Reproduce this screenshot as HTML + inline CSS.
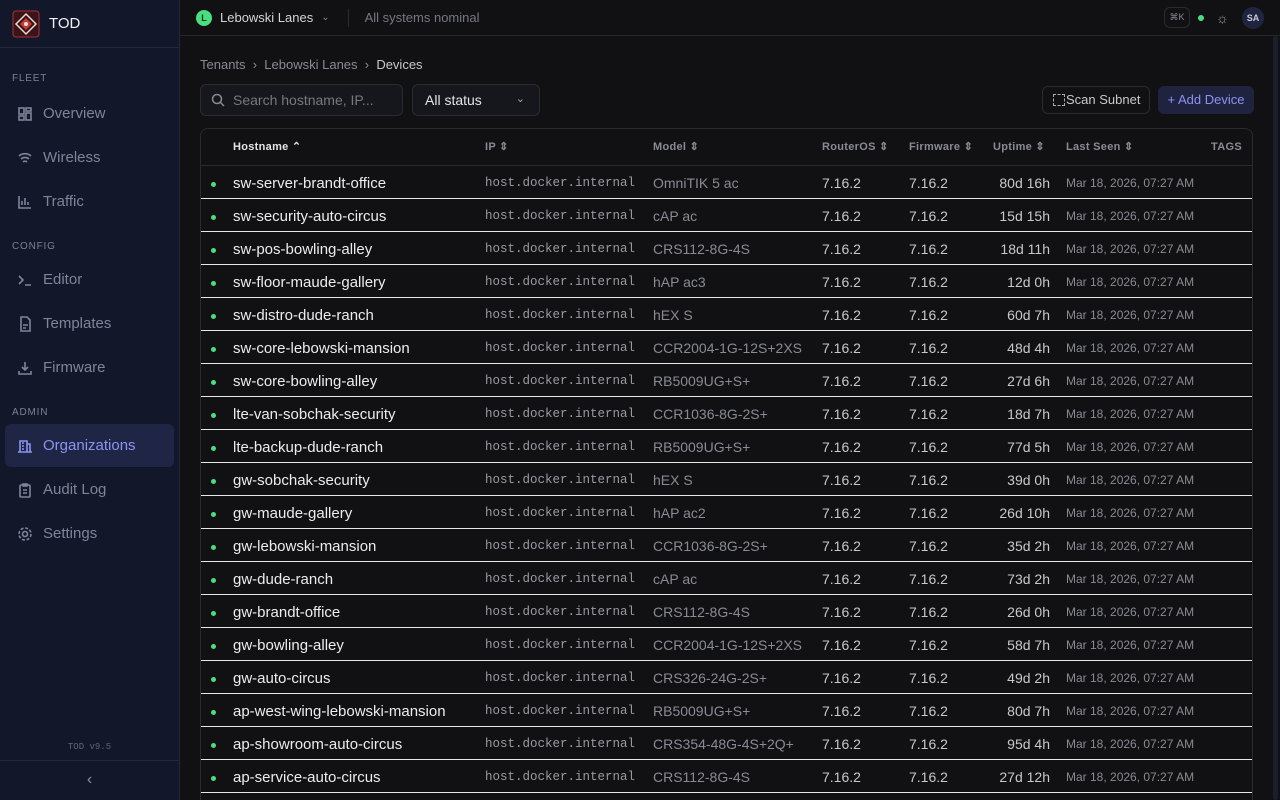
<!DOCTYPE html><html><head><style>
*{box-sizing:border-box;margin:0;padding:0}
html,body{width:1280px;height:800px;overflow:hidden}
body{background:#111113;font-family:"Liberation Sans",sans-serif;color:#e4e4e7;position:relative}
.sb{position:absolute;left:0;top:0;width:180px;height:800px;background:#121829;border-right:1px solid #23283a}
.logo{height:48px;border-bottom:1px solid #23283a;display:flex;align-items:center;padding-left:12px}
.logo span{margin-left:9px;font-size:15px;color:#f1f1f4}
.sec{font-size:10px;letter-spacing:.8px;color:#7b8094;padding-left:12px;margin-top:18px;margin-bottom:6px}
.it{display:flex;align-items:center;height:43px;margin:0 5px;padding-left:12px;border-radius:6px;color:#7f8599;font-size:15px;margin-bottom:1px}
.it svg{width:16px;height:16px;margin-right:10px;stroke:#7f8599;fill:none;stroke-width:1.6}
.it.a{background:#1f2645;color:#8b93f0}.it.a svg{stroke:#8b93f0}
.top{position:absolute;left:180px;top:0;right:0;height:36px;border-bottom:1px solid #25262b;display:flex;align-items:center;font-size:13px}
.bc{position:absolute;left:200px;top:57px;font-size:13px;color:#8a8a94}
.tbl{position:absolute;left:200px;top:128px;width:1053px;height:672px;border:1px solid #2a2b30;border-bottom:none;border-radius:8px 8px 0 0;overflow:hidden}
.hd{height:37px;border-bottom:1px solid #2a2b30;position:relative;font-size:11px;color:#8a8a94;font-weight:bold;letter-spacing:.3px}
.hd span,.r span{position:absolute;top:0;line-height:36px;white-space:nowrap}
.r{height:33px;border-bottom:1px solid #e8e8ea;position:relative}
.r span{line-height:35px}
.h{font-size:15px;color:#ececef}.ip{font-family:"Liberation Mono",monospace;font-size:12.5px;color:#9a9aa3}
.m{font-size:14px;color:#8a8a94}.v{font-size:14px;color:#c8c8cc}.ls{font-size:12px;color:#8a8a94}
.dot{width:5px;height:5px;border-radius:50%;background:#4ade80;top:16px!important;left:10px}
</style></head><body>
<div class="sb">
<div class="logo"><svg width="28" height="28" viewBox="0 0 28 28"><rect x="1" y="1" width="26" height="26" rx="3" fill="#3a1418" stroke="#a8303a"/><path d="M14 4L24 14L14 24L4 14Z" fill="none" stroke="#e8d8c8" stroke-width="1.5"/><path d="M14 8L20 14L14 20L8 14Z" fill="#c83a3a"/><circle cx="14" cy="14" r="2" fill="#f0e0d0"/></svg><span>TOD</span></div>
<div class="sec" style="margin-top:25px;margin-bottom:8px">FLEET</div>
<div class="it"><svg viewBox="0 0 16 16"><rect x="2" y="2" width="5" height="6"/><rect x="9" y="2" width="5" height="3"/><rect x="9" y="7" width="5" height="7"/><rect x="2" y="10" width="5" height="4"/></svg>Overview</div>
<div class="it"><svg viewBox="0 0 16 16"><path d="M2 6a9 9 0 0 1 12 0M4 9a6 6 0 0 1 8 0M6 12a3 3 0 0 1 4 0"/></svg>Wireless</div>
<div class="it"><svg viewBox="0 0 16 16"><path d="M2 2v12h12M5 11V7M8 11V4M11 11V8"/></svg>Traffic</div>
<div class="sec">CONFIG</div>
<div class="it"><svg viewBox="0 0 16 16"><path d="M2 4l4 4-4 4M8 13h6"/></svg>Editor</div>
<div class="it"><svg viewBox="0 0 16 16"><path d="M4 1h6l3 3v11H4zM6 9h5M6 12h3"/></svg>Templates</div>
<div class="it"><svg viewBox="0 0 16 16"><path d="M8 2v8M5 7l3 3 3-3M2 11v3h12v-3"/></svg>Firmware</div>
<div class="sec">ADMIN</div>
<div class="it a"><svg viewBox="0 0 16 16"><path d="M3 14V3h7v11M10 6h3v8M1 14h14M5 5h2M5 8h2M5 11h2"/></svg>Organizations</div>
<div class="it"><svg viewBox="0 0 16 16"><rect x="3" y="3" width="10" height="12" rx="1"/><path d="M6 2h4v2H6zM6 8h4M6 11h4"/></svg>Audit Log</div>
<div class="it"><svg viewBox="0 0 16 16"><circle cx="8" cy="8" r="2.5"/><circle cx="8" cy="8" r="6" stroke-dasharray="3 1.7"/></svg>Settings</div>
<div style="position:absolute;bottom:48px;width:100%;text-align:center;font-family:'Liberation Mono',monospace;font-size:9px;color:#5f6475">TOD v9.5</div>
<div style="position:absolute;bottom:0;width:100%;height:40px;border-top:1px solid #23283a;text-align:center;line-height:38px;color:#8a8fa3;font-size:16px">&#8249;</div>
</div>
<div class="top">
<div style="margin-left:16px;width:16px;height:16px;border-radius:50%;background:#4ade80;color:#0b3a1e;font-size:9px;text-align:center;line-height:16px;font-weight:bold">L</div>
<span style="margin-left:8px;color:#d4d4d8">Lebowski Lanes</span><span style="margin-left:8px;color:#8a8a94;font-size:10px">&#8964;</span>
<div style="width:1px;height:18px;background:#2a2b30;margin:0 16px 0 18px"></div><span style="color:#777780">All systems nominal</span>
<div style="position:absolute;left:984px;top:7px;width:26px;height:21px;border:1px solid #2a2b30;border-radius:6px;font-size:9px;color:#8a8a94;text-align:center;line-height:19px">⌘K</div>
<div style="position:absolute;left:1018px;top:15px;width:6px;height:6px;border-radius:50%;background:#4ade80"></div>
<div style="position:absolute;left:1036px;top:10px;color:#9a9aa3;font-size:14px">☼</div>
<div style="position:absolute;left:1062px;top:7px;width:22px;height:22px;border-radius:50%;background:#1f2540;color:#c8cad8;font-size:9px;font-weight:bold;text-align:center;line-height:22px">SA</div>
</div>
<div class="bc">Tenants &nbsp;›&nbsp; Lebowski Lanes &nbsp;›&nbsp; <span style="color:#c8c8cc">Devices</span></div>
<div style="position:absolute;left:200px;top:84px;width:203px;height:32px;border:1px solid #2a2b30;border-radius:6px;background:#16171c;font-size:14px;color:#777780;line-height:30px;padding-left:32px">Search hostname, IP...<svg style="position:absolute;left:10px;top:8px" width="14" height="14" viewBox="0 0 14 14" fill="none" stroke="#8a8a94" stroke-width="1.5"><circle cx="6" cy="6" r="4.5"/><path d="M9.5 9.5L13 13"/></svg></div>
<div style="position:absolute;left:412px;top:84px;width:128px;height:32px;border:1px solid #2a2b30;border-radius:6px;background:#16171c;font-size:14px;color:#e4e4e7;line-height:30px;padding-left:12px">All status<span style="position:absolute;right:14px;top:-1px;font-size:11px;color:#aaa">&#8964;</span></div>
<div style="position:absolute;left:1042px;top:86px;width:108px;height:28px;border:1px solid #2a2b30;border-radius:6px;font-size:13px;color:#c8c8cc;line-height:26px;padding-left:23px">Scan Subnet<span style="position:absolute;left:10px;top:7px;width:12px;height:12px;border:1.5px dashed #aaa"></span></div>
<div style="position:absolute;left:1158px;top:86px;width:96px;height:28px;border-radius:6px;background:#1f2340;font-size:13px;color:#8b93f0;line-height:28px;text-align:center">+ Add Device</div>
<div style="position:absolute;right:2px;top:36px;width:5px;height:764px;background:#1b1e2c;border-radius:3px"></div>
<div class="tbl">
<div class="hd"><span style="left:32px;color:#e4e4e7">Hostname ⌃</span><span style="left:284px">IP ⇕</span><span style="left:452px">Model ⇕</span><span style="left:621px">RouterOS ⇕</span><span style="left:708px">Firmware ⇕</span><span style="left:792px">Uptime ⇕</span><span style="left:865px">Last Seen ⇕</span><span style="right:10px">TAGS</span></div>
<div id="rows"></div>
</div>
<script>
var d=[["sw-server-brandt-office","OmniTIK 5 ac","80d 16h"],["sw-security-auto-circus","cAP ac","15d 15h"],["sw-pos-bowling-alley","CRS112-8G-4S","18d 11h"],["sw-floor-maude-gallery","hAP ac3","12d 0h"],["sw-distro-dude-ranch","hEX S","60d 7h"],["sw-core-lebowski-mansion","CCR2004-1G-12S+2XS","48d 4h"],["sw-core-bowling-alley","RB5009UG+S+","27d 6h"],["lte-van-sobchak-security","CCR1036-8G-2S+","18d 7h"],["lte-backup-dude-ranch","RB5009UG+S+","77d 5h"],["gw-sobchak-security","hEX S","39d 0h"],["gw-maude-gallery","hAP ac2","26d 10h"],["gw-lebowski-mansion","CCR1036-8G-2S+","35d 2h"],["gw-dude-ranch","cAP ac","73d 2h"],["gw-brandt-office","CRS112-8G-4S","26d 0h"],["gw-bowling-alley","CCR2004-1G-12S+2XS","58d 7h"],["gw-auto-circus","CRS326-24G-2S+","49d 2h"],["ap-west-wing-lebowski-mansion","RB5009UG+S+","80d 7h"],["ap-showroom-auto-circus","CRS354-48G-4S+2Q+","95d 4h"],["ap-service-auto-circus","CRS112-8G-4S","27d 12h"],["ap-x","hAP ac2","10d 1h"]];
var h="";d.forEach(function(r){h+='<div class="r"><span class="dot"></span><span class="h" style="left:32px">'+r[0]+'</span><span class="ip" style="left:284px">host.docker.internal</span><span class="m" style="left:452px">'+r[1]+'</span><span class="v" style="left:621px">7.16.2</span><span class="v" style="left:708px">7.16.2</span><span class="v" style="right:202px">'+r[2]+'</span><span class="ls" style="left:865px">Mar 18, 2026, 07:27 AM</span></div>'});
document.getElementById("rows").innerHTML=h;
</script>
</body></html>
